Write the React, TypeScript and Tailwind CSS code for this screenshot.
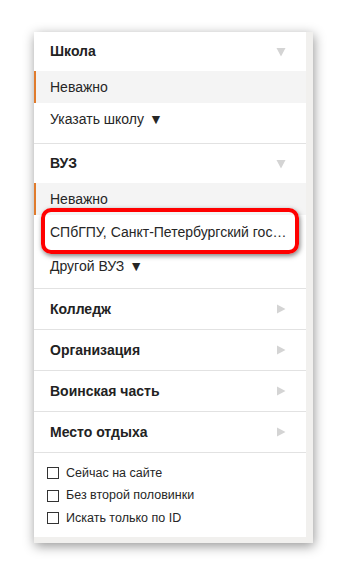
import { ReactNode } from 'react';

const font = { fontFamily: '"Liberation Sans", Arial, sans-serif' };

function DownArrow() {
  return (
    <svg width="10" height="10" viewBox="0 0 10 10" className="text-[#d4d4d4]">
      <path d="M0.5 1 H9.5 L5 9.5 Z" fill="currentColor" />
    </svg>
  );
}

function RightArrow() {
  return (
    <svg width="10" height="10" viewBox="0 0 10 10" className="text-[#d4d4d4]">
      <path d="M1 0.5 V9.5 L9.5 5 Z" fill="currentColor" />
    </svg>
  );
}

function Header({ title, open }: { title: string; open?: boolean }) {
  return (
    <div className="flex h-[39px] items-center justify-between pl-4 pr-[20px]">
      <span className="text-[14px] font-bold text-[#222]">{title}</span>
      {open ? <DownArrow /> : <RightArrow />}
    </div>
  );
}

function Item({ children, active, className = '' }: { children: ReactNode; active?: boolean; className?: string }) {
  return (
    <div
      className={`relative flex h-[32px] items-center pl-4 text-[14px] text-[#262626] ${
        active ? 'border-l-2 border-[#e07b2c] bg-[#f4f4f4] pl-[14px]' : ''
      } ${className}`}
    >
      {children}
    </div>
  );
}

function Check({ label }: { label: string }) {
  return (
    <label className="flex h-[22.5px] items-center gap-[7px] pl-[13px] text-[12.5px] text-[#262626]">
      <span className="h-[12px] w-[12px] border border-[#333] bg-white" />
      {label}
    </label>
  );
}

export default function App() {
  return (
    <div className="min-h-[573px] bg-white pt-[32px]" style={font}>
      <div className="ml-[34px] w-[279px] bg-[#f1f0ee] pb-[6px] pr-[7px] shadow-[1px_3px_11px_rgba(0,0,0,0.42)]">
        <div className="bg-white">
          <div className="border-b border-[#e2e2e2] pb-[7px]">
            <Header title="Школа" open />
            <Item active>Неважно</Item>
            <Item className="h-[33px]">
              Указать школу <span className="ml-[5px] text-[14px]">▼</span>
            </Item>
          </div>

          <div className="border-b border-[#e2e2e2] pb-[5px]">
            <Header title="ВУЗ" open />
            <Item active>Неважно</Item>
            <Item className="h-[34px]">
              <span className="truncate pr-[18px]">СПбГПУ, Санкт-Петербургский гос…</span>
              <div className="pointer-events-none absolute -top-[7px] left-[7px] h-[46px] w-[258px] rounded-[10px] border-4 border-[#ff0000] shadow-[1px_2px_5px_rgba(0,0,0,0.5)]" />
            </Item>
            <Item className="h-[34px]">
              Другой ВУЗ <span className="ml-[5px] text-[14px]">▼</span>
            </Item>
          </div>

          {['Колледж', 'Организация', 'Воинская часть', 'Место отдыха'].map((t) => (
            <div key={t} className="flex h-[41px] items-center justify-between border-b border-[#e2e2e2] pl-4 pr-[20px]">
              <span className="text-[14px] font-bold text-[#222]">{t}</span>
              <RightArrow />
            </div>
          ))}

          <div className="pb-[7px] pt-[9px]">
            <Check label="Сейчас на сайте" />
            <Check label="Без второй половинки" />
            <Check label="Искать только по ID" />
          </div>
        </div>
      </div>
    </div>
  );
}
